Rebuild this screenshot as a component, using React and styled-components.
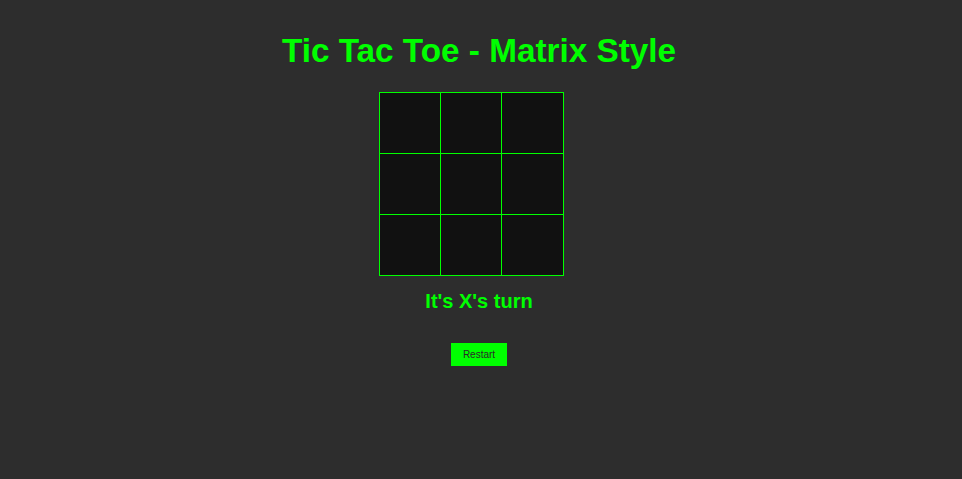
import React, { useState } from "react";
import styled, { createGlobalStyle } from "styled-components";

const GlobalStyle = createGlobalStyle`
  html, body {
    margin: 0;
    padding: 0;
    background: #2d2d2d;
    font-family: "Liberation Sans", Arial, sans-serif;
  }
`;

const Page = styled.div`
  min-height: 100vh;
  display: flex;
  flex-direction: column;
  align-items: center;
  padding: 32px 4px 0 0;
  box-sizing: border-box;
`;

const Title = styled.h1`
  margin: 0;
  font-size: 33.3px;
  font-weight: 700;
  color: #00ff00;
  line-height: 38px;
`;

const BoardWrap = styled.div`
  width: 200px;
  margin-top: 22px;
`;

const Board = styled.div`
  display: grid;
  grid-template-columns: 61px 61px 62px;
  grid-template-rows: repeat(3, 61px);
  border-left: 1px solid #00ff00;
  border-top: 1px solid #00ff00;
  width: max-content;
`;

const Cell = styled.div`
  background: #111111;
  border-right: 1px solid #00ff00;
  border-bottom: 1px solid #00ff00;
  color: #00ff00;
  font-size: 36px;
  font-weight: 700;
  display: flex;
  align-items: center;
  justify-content: center;
  cursor: pointer;
  user-select: none;
`;

const Status = styled.h2`
  margin: 14px 0 0;
  font-size: 20px;
  line-height: 23px;
  font-weight: 700;
  color: #00ff00;
`;

const RestartButton = styled.button`
  margin-top: 30px;
  background: #00ff00;
  color: #2a2a2a;
  border: none;
  padding: 6px 12px;
  font-family: "Liberation Sans", Arial, sans-serif;
  font-size: 10px;
  line-height: 11px;
  cursor: pointer;
`;

export default function App() {
  const [cells, setCells] = useState(Array(9).fill(null));
  const [xNext, setXNext] = useState(true);

  const play = (i) => {
    if (cells[i]) return;
    const next = cells.slice();
    next[i] = xNext ? "X" : "O";
    setCells(next);
    setXNext(!xNext);
  };

  return (
    <>
      <GlobalStyle />
      <Page>
        <Title>Tic Tac Toe - Matrix Style</Title>
        <BoardWrap>
          <Board>
            {cells.map((c, i) => (
              <Cell key={i} onClick={() => play(i)}>
                {c}
              </Cell>
            ))}
          </Board>
        </BoardWrap>
        <Status>It's {xNext ? "X" : "O"}'s turn</Status>
        <RestartButton
          onClick={() => {
            setCells(Array(9).fill(null));
            setXNext(true);
          }}
        >
          Restart
        </RestartButton>
      </Page>
    </>
  );
}
